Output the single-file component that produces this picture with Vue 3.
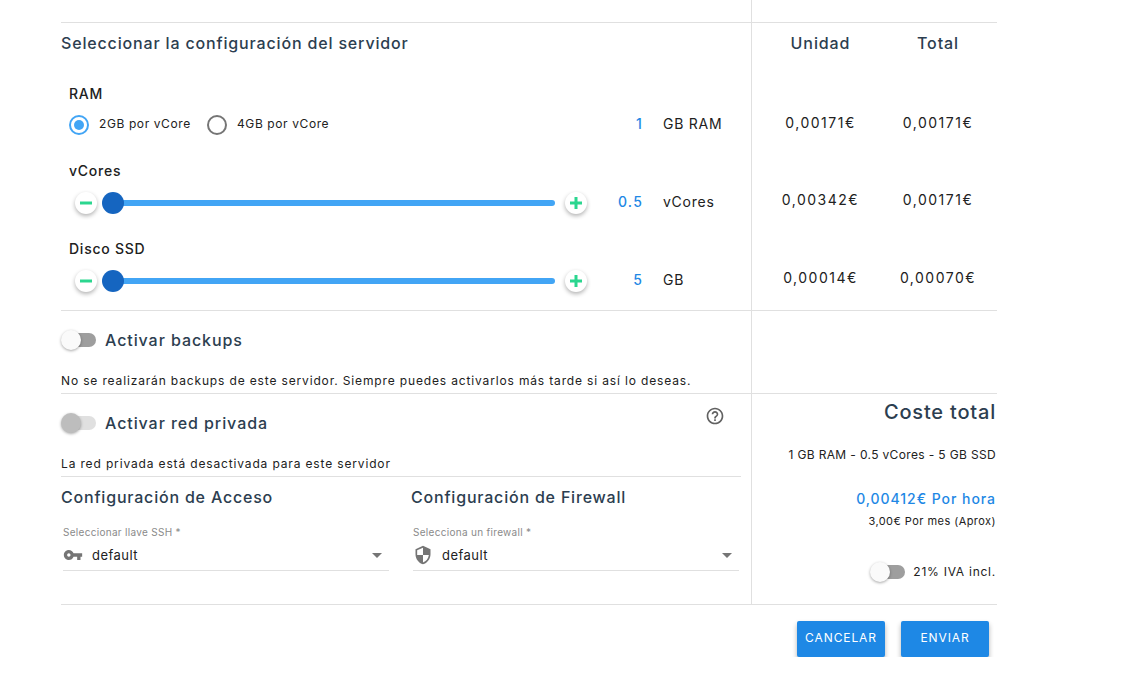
<script setup>
const sliders = [
  { label: 'vCores', value: '0.5', unit: 'vCores', price: '0,00342€', total: '0,00171€' },
  { label: 'Disco SSD', value: '5', unit: 'GB', price: '0,00014€', total: '0,00070€' }
]
</script>

<template>
  <div class="page">
    <div class="grid row-top">
      <div class="left"></div>
      <div class="right"></div>
    </div>

    <div class="grid row-config">
      <div class="left config">
        <h2 class="title">Seleccionar la configuración del servidor</h2>
        <div class="opt ram">
          <div class="opt-label">RAM</div>
          <div class="opt-line">
            <div class="opt-control radios">
              <span class="radio on"><i></i></span>
              <span class="radio-text first">2GB por vCore</span>
              <span class="radio"></span>
              <span class="radio-text">4GB por vCore</span>
            </div>
            <span class="val">1</span>
            <span class="unit">GB RAM</span>
          </div>
        </div>
        <div v-for="s in sliders" :key="s.label" class="opt">
          <div class="opt-label">{{ s.label }}</div>
          <div class="opt-line">
            <div class="opt-control">
              <span class="round">
                <svg width="12" height="12" viewBox="0 0 12 12"><path d="M0 6h12" stroke="#2bd68f" stroke-width="3" /></svg>
              </span>
              <div class="track"><span class="thumb"></span></div>
              <span class="round">
                <svg width="12" height="12" viewBox="0 0 12 12"><path d="M0 6h12M6 0v12" stroke="#2bd68f" stroke-width="3" /></svg>
              </span>
            </div>
            <span class="val">{{ s.value }}</span>
            <span class="unit">{{ s.unit }}</span>
          </div>
        </div>
      </div>
      <div class="right prices">
        <div class="price-row head"><span>Unidad</span><span>Total</span></div>
        <div class="price-row p1"><span>0,00171€</span><span>0,00171€</span></div>
        <div v-for="s in sliders" :key="s.label" class="price-row p2"><span>{{ s.price }}</span><span>{{ s.total }}</span></div>
      </div>
    </div>

    <div class="grid row-backup">
      <div class="left sect">
        <div class="switch-line">
          <span class="switch dark"><i></i></span>
          <span class="switch-label">Activar backups</span>
        </div>
        <p class="note">No se realizarán backups de este servidor. Siempre puedes activarlos más tarde si así lo deseas.</p>
      </div>
      <div class="right"></div>
    </div>

    <div class="grid row-bottom">
      <div class="left bottom-left">
        <div class="sect private">
          <div class="switch-line">
            <span class="switch light"><i></i></span>
            <span class="switch-label">Activar red privada</span>
            <svg class="help" width="20" height="20" viewBox="0 0 24 24" fill="#616161"><path d="M11 18h2v-2h-2v2zm1-16C6.48 2 2 6.48 2 12s4.48 10 10 10 10-4.48 10-10S17.52 2 12 2zm0 18c-4.41 0-8-3.59-8-8s3.59-8 8-8 8 3.59 8 8-3.59 8-8 8zm0-14c-2.21 0-4 1.79-4 4h2c0-1.1.9-2 2-2s2 .9 2 2c0 2-3 1.75-3 5h2c0-2.25 3-2.5 3-5 0-2.21-1.79-4-4-4z"/></svg>
          </div>
          <p class="note">La red privada está desactivada para este servidor</p>
        </div>
        <div class="access">
          <div class="access-col first-col">
            <h3 class="sub">Configuración de Acceso</h3>
            <div class="select">
              <div class="select-label">Seleccionar llave SSH *</div>
              <div class="select-line">
                <svg width="20" height="20" viewBox="0 0 24 24" fill="#757575"><path d="M12.65 10C11.83 7.67 9.61 6 7 6c-3.31 0-6 2.69-6 6s2.69 6 6 6c2.61 0 4.83-1.67 5.65-4H17v4h4v-4h2v-4H12.65zM7 14c-1.1 0-2-.9-2-2s.9-2 2-2 2 .9 2 2-.9 2-2 2z"/></svg>
                <span class="select-value">default</span>
                <span class="caret"></span>
              </div>
            </div>
          </div>
          <div class="access-col">
            <h3 class="sub">Configuración de Firewall</h3>
            <div class="select">
              <div class="select-label">Selecciona un firewall *</div>
              <div class="select-line">
                <svg width="20" height="20" viewBox="0 0 24 24" fill="#757575"><path d="M12 1L3 5v6c0 5.55 3.84 10.74 9 12 5.16-1.26 9-6.45 9-12V5l-9-4zm0 10.99h7c-.53 4.12-3.28 7.79-7 8.94V12H5V6.3l7-3.11v8.8z"/></svg>
                <span class="select-value">default</span>
                <span class="caret"></span>
              </div>
            </div>
          </div>
        </div>
      </div>
      <div class="right summary">
        <h2 class="cost">Coste total</h2>
        <div class="specs">1 GB RAM - 0.5 vCores - 5 GB SSD</div>
        <div class="hour">0,00412€ Por hora</div>
        <div class="month">3,00€ Por mes (Aprox)</div>
        <div class="iva">
          <span class="switch dark"><i></i></span>
          <span>21% IVA incl.</span>
        </div>
      </div>
    </div>

    <div class="actions">
      <button class="btn cancel">CANCELAR</button>
      <button class="btn">ENVIAR</button>
    </div>
  </div>
</template>

<style scoped>
.page {
  width: 936px;
  margin-left: 61px;
  font-family: Inter, Roboto, "Liberation Sans", sans-serif;
  color: #212121;
}
.grid {
  display: grid;
  grid-template-columns: 691px 245px;
  border-bottom: 1px solid #e0e0e0;
}
.left { border-right: 1px solid #e0e0e0; min-width: 0; }
.row-top { height: 23px; box-sizing: border-box; }
.row-config { height: 288px; box-sizing: border-box; }
.row-backup { height: 83px; box-sizing: border-box; }
.row-bottom { height: 211px; box-sizing: border-box; }

.title {
  margin: 0;
  padding-top: 10px;
  height: 24px;
  line-height: 20px;
  font-size: 16px;
  font-weight: 500;
  letter-spacing: 0.84px;
  color: #2c3e50;
}
.opt { padding-left: 8px; height: 78px; box-sizing: border-box; }
.ram { margin-top: 26px; }
.opt-label {
  font-size: 14px;
  font-weight: 500;
  letter-spacing: 0.75px;
  line-height: 20px;
  height: 20px;
}
.ram .opt-label { padding-top: 1px; margin-bottom: -1px; }
.opt-line { display: flex; align-items: center; height: 36px; margin-top: 4px; }
.opt-control { width: 526px; display: flex; align-items: center; padding-left: 6px; box-sizing: border-box; }
.radios { padding-left: 0; }
.radio {
  width: 20px;
  height: 20px;
  box-sizing: border-box;
  border: 2px solid #757575;
  border-radius: 50%;
  display: flex;
  align-items: center;
  justify-content: center;
  flex: none;
}
.radio.on { border-color: #42a5f5; }
.radio i { width: 10px; height: 10px; border-radius: 50%; background: #42a5f5; }
.radio-text { font-size: 12px; letter-spacing: 0.6px; margin-left: 10px; margin-bottom: 3px; }
.radio-text.first { width: 108px; flex: none; }
.round {
  width: 22px;
  height: 22px;
  border-radius: 50%;
  background: #fff;
  box-shadow: 0 2px 4px rgba(0, 0, 0, 0.3);
  display: flex;
  align-items: center;
  justify-content: center;
  flex: none;
}
.track {
  position: relative;
  width: 442px;
  height: 6px;
  margin: 0 10px 0 16px;
  background: #42a5f5;
  border-radius: 3px;
}
.thumb {
  position: absolute;
  left: -11px;
  top: -8px;
  width: 22px;
  height: 22px;
  border-radius: 50%;
  background: #1565c0;
}
.val {
  width: 48px;
  text-align: right;
  font-size: 14px;
  font-weight: 500;
  letter-spacing: 1.2px;
  color: #1e88e5;
  margin-bottom: 3px;
}
.unit { margin-left: 20px; font-size: 14px; letter-spacing: 0.75px; margin-bottom: 3px; }

.prices { padding-top: 10px; }
.price-row {
  display: grid;
  grid-template-columns: 137px 98px;
  font-size: 14px;
  letter-spacing: 1.5px;
  text-align: center;
}
.price-row.head { height: 20px; line-height: 20px; font-size: 16px; font-weight: 500; letter-spacing: 0.9px; color: #2c3e50; }
.price-row.p1 { margin-top: 60px; height: 20px; line-height: 20px; }
.price-row.p2 { margin-top: 57px; height: 21px; line-height: 20px; }

.sect { display: flex; flex-direction: column; }
.switch-line { display: flex; align-items: center; height: 20px; margin-top: 19px; position: relative; }
.switch {
  width: 34px;
  height: 14px;
  border-radius: 7px;
  position: relative;
  flex: none;
  margin-left: 1px;
}
.switch i {
  position: absolute;
  left: -1px;
  top: -3px;
  width: 20px;
  height: 20px;
  border-radius: 50%;
  background: #fafafa;
  box-shadow: 0 1px 3px rgba(0, 0, 0, 0.35);
}
.switch.dark { background: #9e9e9e; }
.switch.light { background: #e0e0e0; }
.switch.light i { background: #bdbdbd; }
.switch-label {
  margin-left: 9px;
  font-size: 16px;
  font-weight: 500;
  letter-spacing: 0.92px;
  color: #2c3e50;
}
.help { margin-left: auto; margin-right: 16px; margin-top: -14px; }
.note { margin: 23px 0 0; font-size: 12px; line-height: 16px; letter-spacing: 0.85px; }

.bottom-left { display: flex; flex-direction: column; }
.private { height: 83px; box-sizing: border-box; border-bottom: 1px solid #e0e0e0; margin-right: 10px; }
.access { display: flex; }
.access-col { flex: 1; min-width: 0; }
.first-col { flex: none; width: 350px; }
.sub {
  margin: 10px 0 0;
  height: 20px;
  line-height: 20px;
  font-size: 16px;
  font-weight: 500;
  letter-spacing: 0.8px;
  color: #2c3e50;
}
.select { margin: 0 0 0 2px; width: 326px; border-bottom: 1px solid #e0e0e0; }
.select-label { margin-top: 18px; font-size: 10px; line-height: 14px; letter-spacing: 0.3px; color: #8a8a8a; }
.select-line { display: flex; align-items: center; height: 31px; padding-top: 1px; box-sizing: border-box; }
.select-value { margin-left: 9px; font-size: 13px; letter-spacing: 0.45px; }
.caret {
  margin-left: auto;
  margin-right: 7px;
  border-left: 5px solid transparent;
  border-right: 5px solid transparent;
  border-top: 5px solid #757575;
}

.summary { display: flex; flex-direction: column; align-items: flex-end; text-align: right; }
.cost { margin: 6px 1px 0 0; height: 24px; line-height: 24px; font-size: 20px; font-weight: 500; letter-spacing: 0.8px; color: #2c3e50; }
.specs { margin-top: 23px; margin-right: 1px; font-size: 12px; line-height: 16px; letter-spacing: 0.35px; }
.hour { margin-top: 26px; margin-right: 1px; font-size: 14px; line-height: 20px; font-weight: 500; letter-spacing: 0.95px; color: #1e88e5; }
.month { margin-top: 5px; margin-right: 1px; font-size: 11px; line-height: 14px; letter-spacing: 0.45px; }
.iva { margin-top: 36px; margin-right: 1px; display: flex; align-items: center; gap: 8px; font-size: 12px; letter-spacing: 0.75px; }

.actions { display: flex; justify-content: flex-end; gap: 16px; padding: 16px 8px 0 0; }
.btn {
  width: 88px;
  height: 36px;
  border: none;
  border-radius: 2px;
  background: #1e88e5;
  color: #fff;
  font-family: inherit;
  font-size: 12px;
  letter-spacing: 0.9px;
  box-shadow: 0 3px 5px rgba(0, 0, 0, 0.3);
  padding: 0 0 3px;
}
</style>
